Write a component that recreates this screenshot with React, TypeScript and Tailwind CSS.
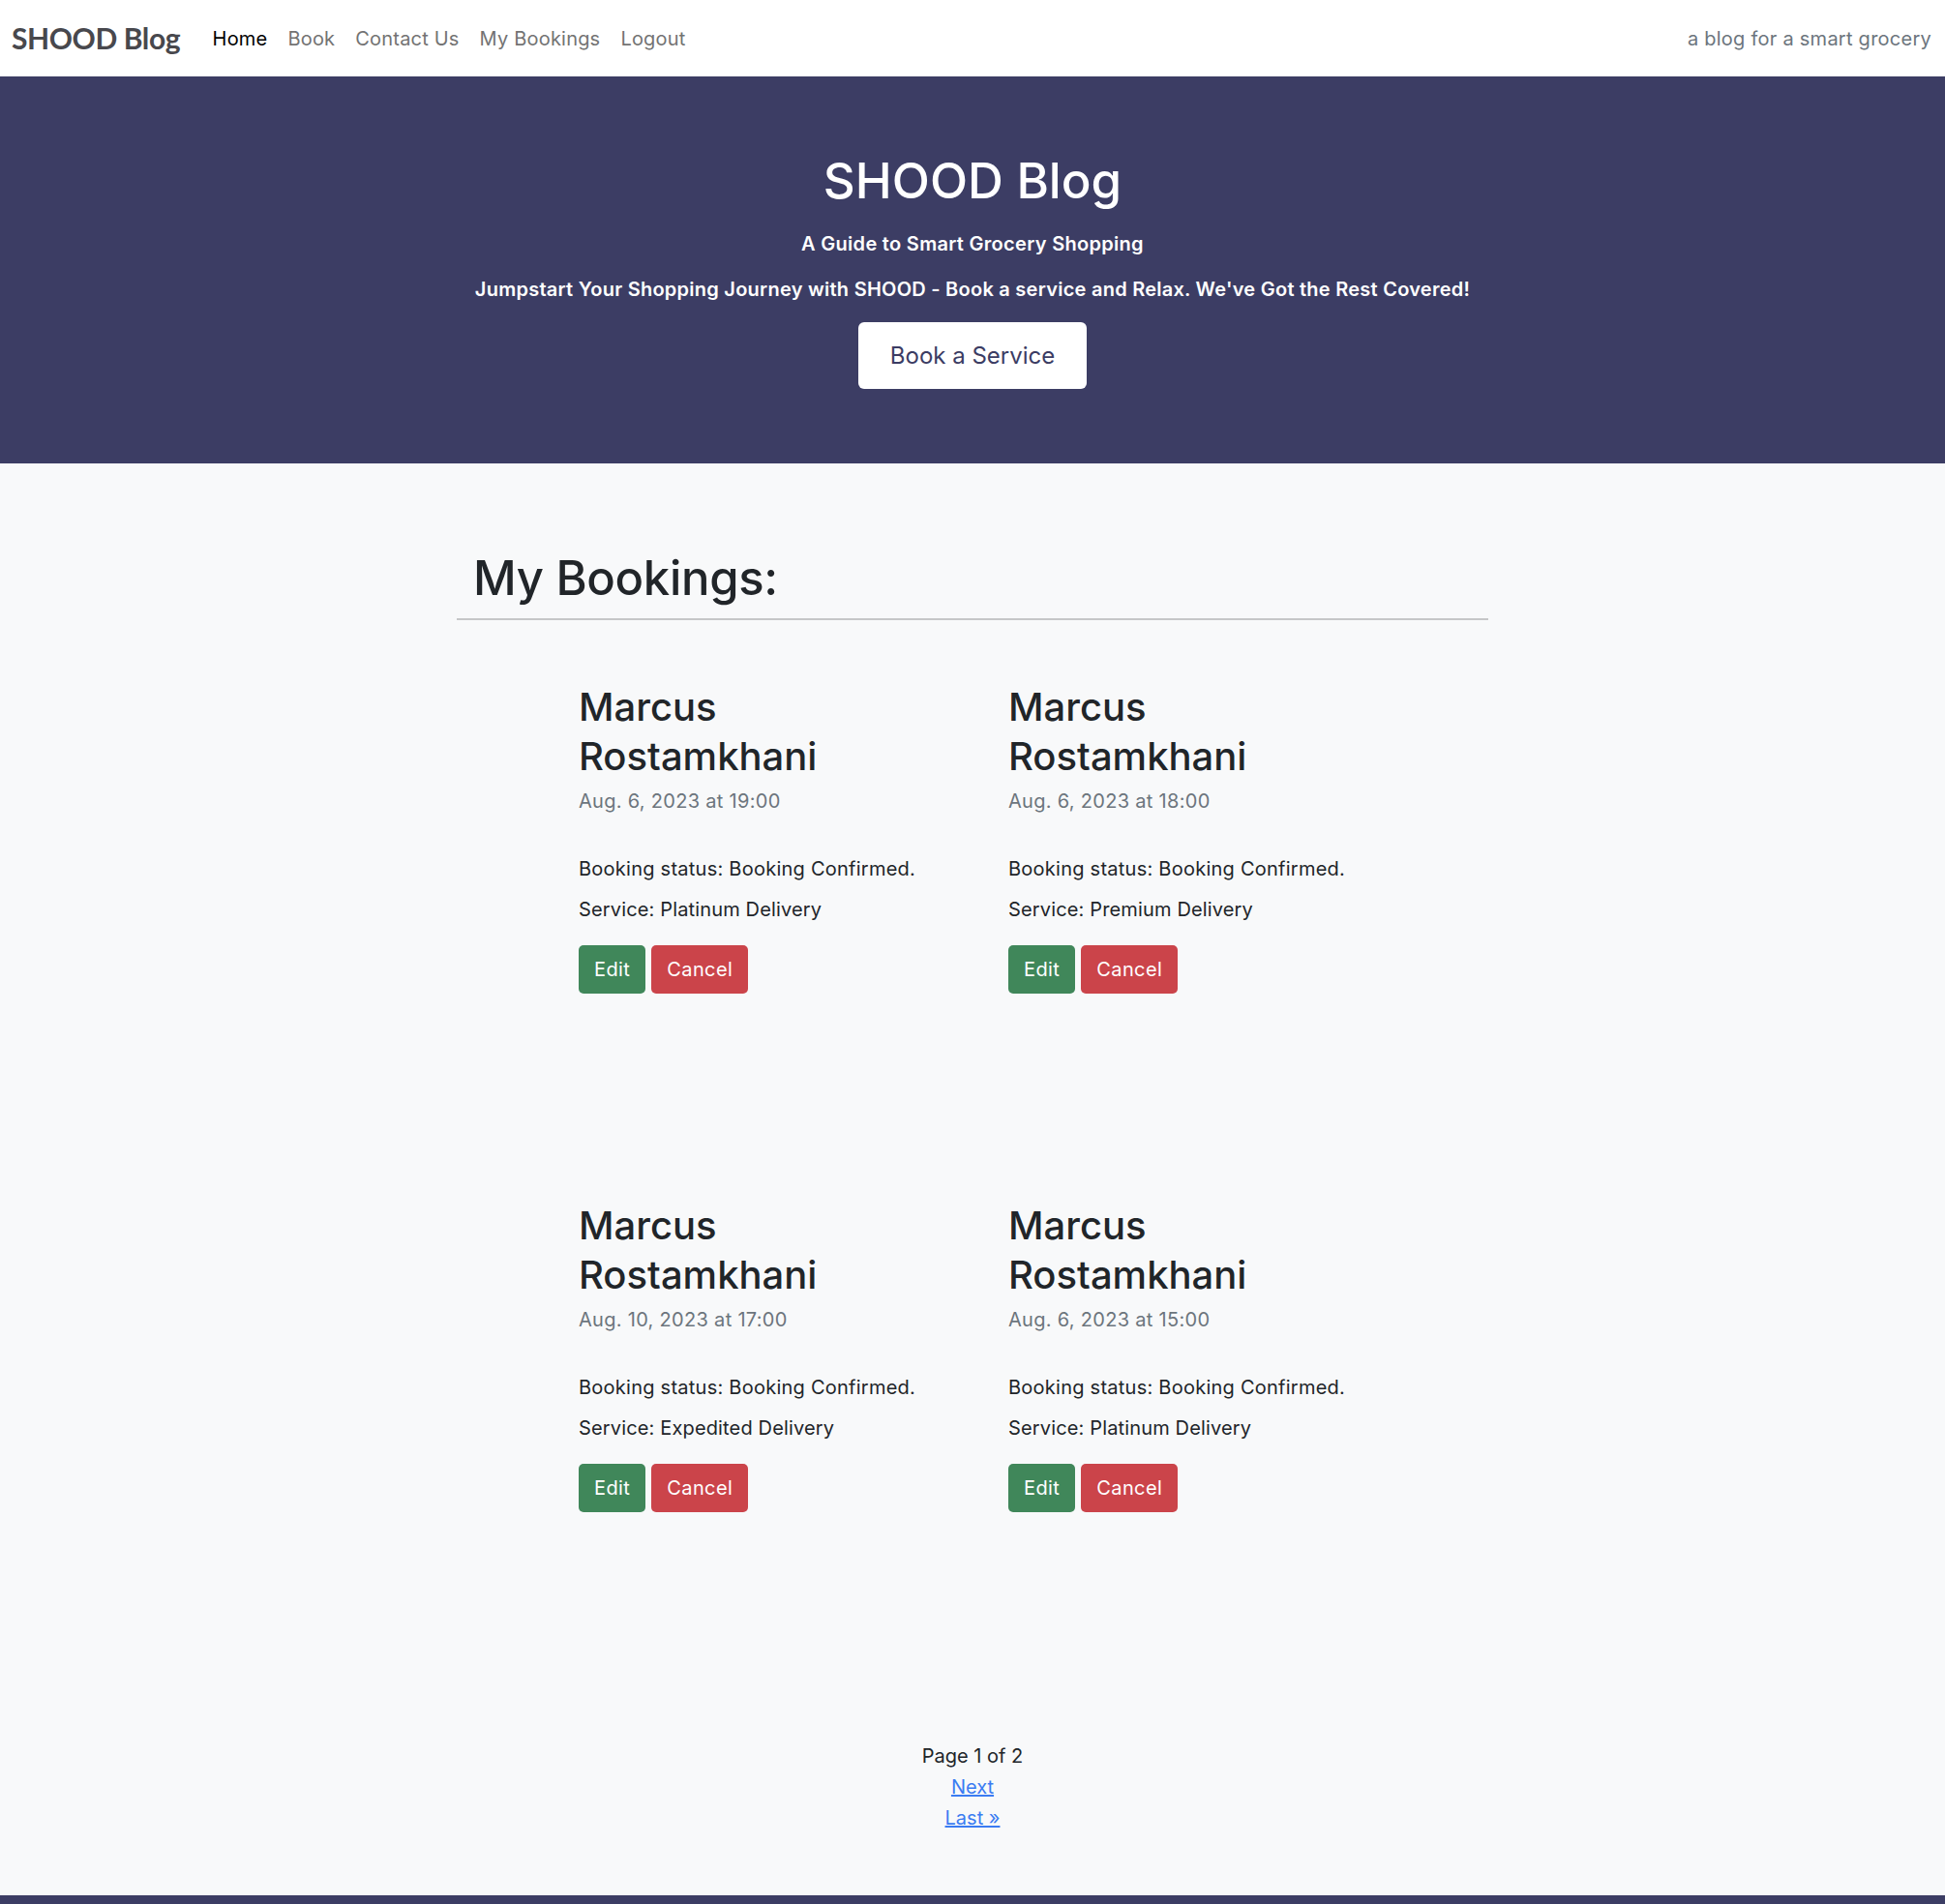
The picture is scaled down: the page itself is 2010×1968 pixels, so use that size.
import React from "react";

const bookings = [
  { date: "Aug. 6, 2023 at 19:00", service: "Platinum Delivery" },
  { date: "Aug. 6, 2023 at 18:00", service: "Premium Delivery" },
  { date: "Aug. 10, 2023 at 17:00", service: "Expedited Delivery" },
  { date: "Aug. 6, 2023 at 15:00", service: "Platinum Delivery" },
];

function Card({ date, service }: { date: string; service: string }) {
  return (
    <div className="h-[536px]">
      <h2 className="text-[40px] leading-[51px] font-medium text-[#212529]">
        Marcus
        <br />
        Rostamkhani
      </h2>
      <div className="mt-[6px] text-[20px] leading-[30px] tracking-[0.3px] text-[#6c757d]">{date}</div>
      <p className="mt-[40px] text-[20px] leading-[30px] tracking-[0.25px] text-[#212529]">
        Booking status: Booking Confirmed.
      </p>
      <p className="mt-[12px] text-[20px] leading-[30px] tracking-[0.15px] text-[#212529]">Service: {service}</p>
      <div className="mt-[22px] flex gap-[6px]">
        <button className="h-[50px] px-[16px] rounded-[5px] bg-[#40875a] text-white text-[20px] tracking-[0.4px]">
          Edit
        </button>
        <button className="h-[50px] px-[16px] rounded-[5px] bg-[#cb444a] text-white text-[20px] tracking-[0.4px]">
          Cancel
        </button>
      </div>
    </div>
  );
}

export default function App() {
  return (
    <div className="min-h-[1968px] bg-[#f8f9fa] font-['Inter',sans-serif] text-[#212529]">
      <nav className="h-[79px] bg-white flex items-center justify-between pl-[12px] pr-[14px]">
        <div className="flex items-center">
          <span className="font-['Lato',sans-serif] font-bold text-[30px] text-[#48484d] tracking-[-0.4px]">
            SHOOD Blog
          </span>
          <ul className="flex items-center ml-[23px] text-[20px] tracking-[0.2px]">
            <li className="px-[10.5px] text-black">Home</li>
            <li className="px-[10.5px] text-[#737373]">Book</li>
            <li className="px-[10.5px] text-[#737373]">Contact Us</li>
            <li className="px-[10.5px] text-[#737373]">My Bookings</li>
            <li className="px-[10.5px] text-[#737373]">Logout</li>
          </ul>
        </div>
        <span className="text-[20px] tracking-[0.25px] text-[#6c757d]">a blog for a smart grocery</span>
      </nav>

      <header className="h-[400px] bg-[#3c3d64] text-white flex flex-col items-center pt-[78px]">
        <h1 className="text-[51px] leading-[60px] font-medium">SHOOD Blog</h1>
        <p className="mt-[20px] text-[20px] leading-[30px] font-semibold tracking-[0.3px]">
          A Guide to Smart Grocery Shopping
        </p>
        <p className="mt-[17px] text-[20px] leading-[30px] font-semibold tracking-[0.25px]">
          Jumpstart Your Shopping Journey with SHOOD - Book a service and Relax. We've Got the Rest Covered!
        </p>
        <button className="mt-[19px] h-[69px] w-[236px] bg-white rounded-[6px] text-[24px] text-[#3b3c63]">
          Book a Service
        </button>
      </header>

      <main className="w-[1066px] mx-auto pt-[89px]">
        <h1 className="pl-[17px] text-[49px] leading-[60px] font-medium tracking-[-0.3px]">My Bookings:</h1>
        <hr className="mt-[11px] border-0 border-t-2 border-[#c6c7c8]" />
        <div className="mt-[64px] ml-[126px] grid grid-cols-[444px_444px]">
          {bookings.map((b, i) => (
            <Card key={i} date={b.date} service={b.service} />
          ))}
        </div>
        <div className="mt-[22px] flex flex-col items-center text-[20px] leading-[32px]">
          <span>Page 1 of 2</span>
          <a href="#" className="text-[#3b7cf2] underline">Next</a>
          <a href="#" className="text-[#3b7cf2] underline">Last »</a>
        </div>
      </main>

      <footer className="mt-[64px] h-[60px] bg-[#3c3d64]" />
    </div>
  );
}
